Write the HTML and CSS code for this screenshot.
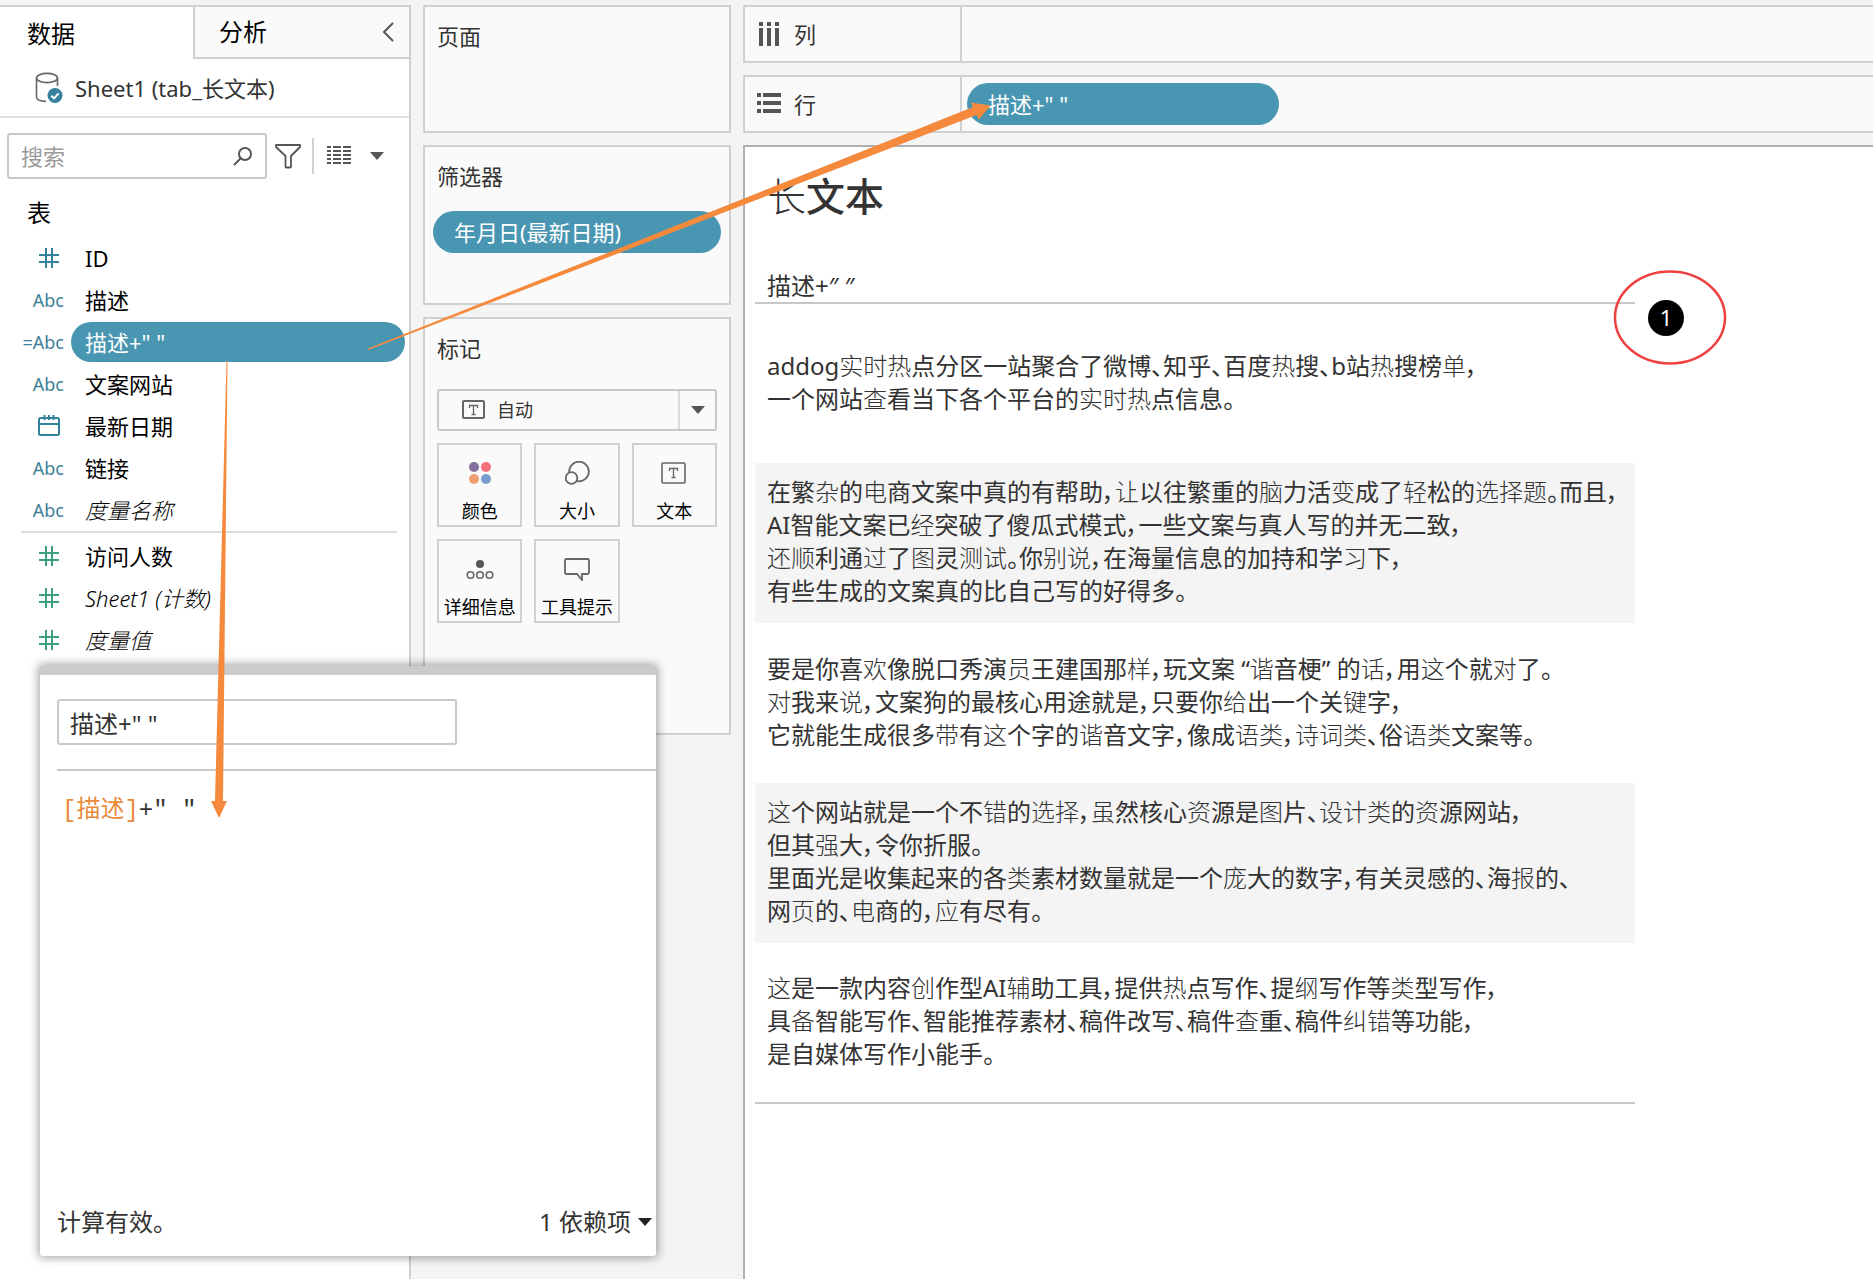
FILE: index.html
```html
<!DOCTYPE html>
<html lang="zh-CN">
<head>
<meta charset="utf-8">
<title>长文本</title>
<meta name="viewport" content="width=device-width, initial-scale=1">
<link rel="stylesheet" href="styles.css">
</head>
<body>
<div class="app">
  <aside class="data-pane">
    <div class="tabs">
      <button class="tab tab-active" type="button">数据</button>
      <button class="tab tab-idle" type="button">分析
        <svg width="14" height="22" viewBox="0 0 14 22" fill="none" stroke="#555" stroke-width="2"><path d="M12 2 3 11l9 9"/></svg>
      </button>
    </div>
    <div class="source">
      <svg width="28" height="32" viewBox="0 0 28 32" fill="none" stroke="#666" stroke-width="1.6"><ellipse cx="12" cy="6" rx="10.5" ry="4.6"/><path d="M1.500 6v19c0 2.600 4 4.200 9.500 4.400M22.500 6v8"/><circle cx="20" cy="23.500" r="7.500" fill="#35809c" stroke="none"/><path d="m16.300 23.800 2.700 2.600 4.600-5" stroke="#fff" stroke-width="2"/></svg>
      <span>Sheet1 (tab_长文本)</span>
    </div>
    <div class="search-row">
      <div class="search">
        <input type="text" placeholder="搜索" aria-label="搜索">
        <svg width="20" height="20" viewBox="0 0 20 20" fill="none" stroke="#555" stroke-width="2"><circle cx="12" cy="8" r="6"/><path d="m8 12-7 7"/></svg>
      </div>
      <button class="icon-button" type="button" aria-label="筛选"><svg width="26" height="26" viewBox="0 0 26 26" fill="none" stroke="#555" stroke-width="1.800" stroke-linejoin="round"><path d="M1 2h24v2l-9 9v10.500q0 1-1 1h-3.500q-1 0-1-1V13L1 4z"/></svg></button>
      <span class="rule"></span>
      <button class="icon-button menu" type="button" aria-label="视图">
        <svg width="24" height="20" viewBox="0 0 24 20" stroke="#555" stroke-width="2"><path d="M0 1h4M6 1h8M16 1h8M0 5h4M6 5h8M16 5h8M0 9h4M6 9h8M16 9h8M0 13h4M6 13h8M16 13h8M0 17h4M6 17h8M16 17h8"/></svg>
        <svg width="14" height="8" viewBox="0 0 14 8" fill="#555"><path d="M0 0h14L7 8z"/></svg>
      </button>
    </div>
    <h2 class="pane-title">表</h2>
    <ul class="fields">
      <li><span class="type"><svg class="hash" width="20" height="20" viewBox="0 0 20 20"><path d="M7 0v20M13 0v20M0 7h20M0 14h20"/></svg></span><span class="name">ID</span></li>
      <li><span class="type">Abc</span><span class="name">描述</span></li>
      <li><span class="type">=Abc</span><span class="name selected">描述+" "</span></li>
      <li><span class="type">Abc</span><span class="name">文案网站</span></li>
      <li><span class="type"><svg class="cal" width="22" height="22" viewBox="0 0 22 22"><rect x="1" y="3" width="20" height="17" rx="1.500"/><path d="M1 9h20M6.500 0v5M11 0v5M15.500 0v5"/></svg></span><span class="name">最新日期</span></li>
      <li><span class="type">Abc</span><span class="name">链接</span></li>
      <li><span class="type">Abc</span><span class="name generated">度量名称</span></li>
    </ul>
    <ul class="fields measures">
      <li><span class="type"><svg class="hash" width="20" height="20" viewBox="0 0 20 20"><path d="M7 0v20M13 0v20M0 7h20M0 14h20"/></svg></span><span class="name">访问人数</span></li>
      <li><span class="type"><svg class="hash" width="20" height="20" viewBox="0 0 20 20"><path d="M7 0v20M13 0v20M0 7h20M0 14h20"/></svg></span><span class="name generated">Sheet1 (计数)</span></li>
      <li><span class="type"><svg class="hash" width="20" height="20" viewBox="0 0 20 20"><path d="M7 0v20M13 0v20M0 7h20M0 14h20"/></svg></span><span class="name generated">度量值</span></li>
    </ul>
  </aside>

  <section class="cards">
    <div class="card pages"><h3>页面</h3></div>
    <div class="card filters"><h3>筛选器</h3><button class="pill" type="button">年月日(最新日期)</button></div>
    <div class="card marks">
      <h3>标记</h3>
      <div class="mark-type">
        <svg class="t-icon" width="24" height="20" viewBox="0 0 24 20" fill="none" stroke="#666" stroke-width="2"><rect x="1" y="1" width="21" height="17" rx="1"/><path d="M7.500 8V5.500h8V8M11.500 5.500v9M9.500 14.500h4" stroke-width="1.300"/></svg>
        <select aria-label="标记类型"><option>自动</option></select>
        <span class="drop"><svg width="14" height="8" viewBox="0 0 14 8" fill="#555"><path d="M0 0h14L7 8z"/></svg></span>
      </div>
      <div class="mark-grid">
        <button type="button"><svg width="24" height="24" viewBox="0 0 24 24"><circle cx="6" cy="6" r="5" fill="#84709c"/><circle cx="18" cy="6" r="5" fill="#f4707c"/><circle cx="6" cy="18" r="5" fill="#f0a070"/><circle cx="18" cy="18" r="5" fill="#7a9ccc"/></svg>颜色</button>
        <button type="button"><svg width="26" height="24" viewBox="0 0 26 24" fill="#fafafa" stroke="#666" stroke-width="1.800"><circle cx="15" cy="10.500" r="9.800"/><circle cx="7.500" cy="17" r="5.800"/></svg>大小</button>
        <button type="button"><svg width="26" height="24" viewBox="0 0 26 24" fill="none" stroke="#666" stroke-width="1.600"><rect x="1" y="2" width="23" height="20" rx="1"/><path d="M8.500 10V7.500h8V10M12.500 7.500v9M10.500 16.500h4" stroke-width="1.300"/></svg>文本</button>
        <button type="button"><svg width="28" height="24" viewBox="0 0 28 24" fill="none" stroke="#666" stroke-width="1.600"><circle cx="14" cy="7" r="4" fill="#555" stroke="none"/><circle cx="4.500" cy="18" r="3.300"/><circle cx="14" cy="18" r="3.300"/><circle cx="23.500" cy="18" r="3.300"/></svg>详细信息</button>
        <button type="button"><svg width="26" height="24" viewBox="0 0 26 24" fill="none" stroke="#666" stroke-width="1.800"><path d="M2.500 2h21q1.500 0 1.500 1.500v12q0 1.500-1.500 1.500H18v6l-5-6H2.500Q1 17 1 15.500v-12Q1 2 2.500 2z"/></svg>工具提示</button>
      </div>
    </div>
  </section>

  <main class="workspace">
    <div class="shelf">
      <div class="shelf-label"><svg width="24" height="24" viewBox="0 0 24 24" fill="#555"><path d="M2 0h4v4H2zM10 0h4v4h-4zM18 0h4v4h-4zM2 6h4v18H2zM10 6h4v18h-4zM18 6h4v18h-4z"/></svg>列</div>
      <div class="shelf-drop"></div>
    </div>
    <div class="shelf">
      <div class="shelf-label"><svg width="24" height="24" viewBox="0 0 24 24" fill="#555"><path d="M0 1h4v4H0zM0 9h4v4H0zM0 17h4v4H0zM6 1h18v4H6zM6 9h18v4H6zM6 17h18v4H6z"/></svg>行</div>
      <div class="shelf-drop"><button class="pill row-pill" type="button">描述+" "</button></div>
    </div>
    <div class="sheet">
      <h1><span class="thin">长</span>文本</h1>
      <table>
        <thead><tr><th scope="col">描述+″ ″</th></tr></thead>
        <tbody>
          <tr><td>addog<span class="thin">实时热</span>点分区一站聚合了微博、知乎、百度<span class="thin">热</span>搜、b站<span class="thin">热</span>搜榜<span class="thin">单</span>，<br>一个网站<span class="thin">查</span>看当下各个平台的<span class="thin">实时热</span>点信息。</td></tr>
          <tr><td>在繁<span class="thin">杂</span>的<span class="thin">电</span>商文案中真的有帮助，<span class="thin">让</span>以往繁重的<span class="thin">脑</span>力活<span class="thin">变</span>成了<span class="thin">轻</span>松的<span class="thin">选择题</span>。而且，<br>AI智能文案已<span class="thin">经</span>突破了傻瓜式模式，一些文案与真人写的并无二致，<br><span class="thin">还顺</span>利通<span class="thin">过</span>了<span class="thin">图</span>灵<span class="thin">测试</span>。你<span class="thin">别说</span>，在海量信息的加持和学<span class="thin">习</span>下，<br>有些生成的文案真的比自己写的好得多。</td></tr>
          <tr><td>要是你喜<span class="thin">欢</span>像脱口秀演<span class="thin">员</span>王建国那<span class="thin">样</span>，玩文案 “<span class="thin">谐</span>音梗” 的<span class="thin">话</span>，用<span class="thin">这</span>个就<span class="thin">对</span>了。<br><span class="thin">对</span>我来<span class="thin">说</span>，文案狗的最核心用途就是，只要你<span class="thin">给</span>出一个关<span class="thin">键</span>字，<br>它就能生成很多<span class="thin">带</span>有<span class="thin">这</span>个字的<span class="thin">谐</span>音文字，像成<span class="thin">语类</span>，<span class="thin">诗词类</span>、俗<span class="thin">语类</span>文案等。</td></tr>
          <tr><td><span class="thin">这</span>个网站就是一个不<span class="thin">错</span>的<span class="thin">选择</span>，<span class="thin">虽</span>然核心<span class="thin">资</span>源是<span class="thin">图</span>片、<span class="thin">设计类</span>的<span class="thin">资</span>源网站，<br>但其<span class="thin">强</span>大，令你折服。<br>里面光是收集起来的各<span class="thin">类</span>素材数量就是一个<span class="thin">庞</span>大的数字，有关灵感的、海<span class="thin">报</span>的、<br>网<span class="thin">页</span>的、<span class="thin">电</span>商的，<span class="thin">应</span>有尽有。</td></tr>
          <tr><td><span class="thin">这</span>是一款内容<span class="thin">创</span>作型AI<span class="thin">辅</span>助工具，提供<span class="thin">热</span>点写作、提<span class="thin">纲</span>写作等<span class="thin">类</span>型写作，<br>具<span class="thin">备</span>智能写作、智能推荐素材、稿件改写、稿件<span class="thin">查</span>重、稿件<span class="thin">纠错</span>等功能，<br>是自媒体写作小能手。</td></tr>
        </tbody>
      </table>
    </div>
  </main>
</div>

<section class="dialog" role="dialog" aria-label="计算字段">
  <div class="dialog-head"><input type="text" value='描述+" "' aria-label="字段名称"></div>
  <div class="formula"><span class="field-ref">[描述]</span>+" "</div>
  <div class="dialog-foot">
    <span>计算有效。</span>
    <button type="button">1 依赖项<svg width="14" height="8" viewBox="0 0 14 8" fill="#222"><path d="M0 0h14L7 8z"/></svg></button>
  </div>
</section>

<svg class="notes" width="1740" height="830" viewBox="0 0 1740 830" aria-hidden="true">
  <path fill="#f68a3c" d="M368 348.500 973 107 971 102.500 990.500 105.500 979 119.500 976.500 115 368 350z"/>
  <path fill="#f68a3c" d="M226.500 361 215 801h-4l8 17 8-17h-4L227.500 361z"/>
  <ellipse cx="1670" cy="317.500" rx="55" ry="46" fill="none" stroke="#ee4040" stroke-width="2.500"/>
</svg>
<span class="badge">1</span>
</body>
</html>
```
FILE: styles.css
```css
* { box-sizing: border-box; }

body {
  margin: 0;
  background: #f4f4f4;
  color: #333;
  font: 22px/32px "Noto Sans", "Noto Sans CJK SC", sans-serif;
}

button, input, select {
  margin: 0;
  padding: 0;
  border: 0;
  background: none;
  color: inherit;
  font: inherit;
}

h1, h2, h3 { margin: 0; font-weight: 400; }
ul { margin: 0; padding: 0; list-style: none; }
svg { display: block; flex: none; }

.app {
  display: grid;
  grid-template-columns: 411px 308px 1fr;
  gap: 12px;
  min-height: 100vh;
  padding-top: 5px;
}

/* data pane */
.data-pane {
  background: #fff;
  border-top: 2px solid #d0d0d0;
  border-right: 2px solid #d0d0d0;
}
.tabs { display: flex; height: 52px; font-size: 24px; color: #000; }
.tab { text-align: left; padding: 2px 0 0 27px; }
.tab-active { width: 193px; }
.tab-idle {
  flex: 1;
  display: flex;
  align-items: center;
  justify-content: space-between;
  padding: 0 14px 0 24px;
  background: #fafafa;
  border-left: 2px solid #d0d0d0;
  border-bottom: 2px solid #d0d0d0;
}
.source {
  display: flex;
  align-items: center;
  gap: 12px;
  height: 59px;
  padding-left: 35px;
  border-bottom: 2px solid #e0e0e0;
}
.search-row { display: flex; align-items: center; padding: 15px 0 0 7px; }
.search {
  display: flex;
  align-items: center;
  width: 260px;
  height: 46px;
  padding: 0 12px;
  border: 2px solid #c8c8c8;
  border-radius: 3px;
}
.search input { flex: 1; min-width: 0; }
.search input::placeholder { color: #999; opacity: 1; }
.icon-button { padding-left: 8px; }
.rule { width: 2px; height: 36px; margin: 0 13px 0 11px; background: #d0d0d0; }
.menu { display: flex; align-items: center; gap: 19px; padding-left: 0; }
.pane-title { padding: 18px 0 8px 27px; font-size: 24px; color: #000; }
.fields li { display: flex; align-items: center; height: 42px; }
.type {
  width: 64px;
  margin-right: 7px;
  text-align: right;
  font-size: 18px;
  color: #3b7f98;
}
.type svg { margin-left: auto; margin-right: 5px; fill: none; stroke: #35809c; stroke-width: 2; }
.type .cal { margin-right: 4px; }
.name { flex: 1; height: 40px; margin-right: 4px; padding-left: 14px; line-height: 40px; color: #000; }
.selected { border-radius: 20px; background: #4996b2; color: #fff; }
.generated { font-style: italic; font-weight: 300; }
.measures { margin: 0 12px 0 21px; border-top: 2px solid #dcdcdc; padding-top: 2px; }
.measures .type { width: 43px; }
.measures .type svg { stroke: #3f9f7c; }

/* cards */
.cards { display: flex; flex-direction: column; gap: 12px; }
.card { background: #fafafa; border: 2px solid #d0d0d0; }
.card h3 { padding: 13px 0 0 12px; font-size: 22px; }
.pages { height: 128px; }
.filters { height: 160px; }
.marks { height: 418px; }
.pill {
  display: block;
  height: 42px;
  border-radius: 21px;
  background: #4996b2;
  color: #fff;
  text-align: left;
  padding-left: 21px;
}
.filters .pill { width: 288px; margin: 19px 0 0 8px; }
.mark-type {
  display: flex;
  align-items: center;
  height: 42px;
  margin: 25px 12px 12px;
  border: 2px solid #c8c8c8;
  border-radius: 3px;
}
.t-icon { margin: 0 11px 0 23px; }
.mark-type select { flex: 1; appearance: none; font-size: 18px; height: 36px; }
.drop {
  display: flex;
  align-items: center;
  justify-content: center;
  width: 37px;
  height: 38px;
  border-left: 2px solid #dcdcdc;
}
.mark-grid {
  display: grid;
  grid-template-columns: repeat(3, 1fr);
  gap: 12px;
  margin: 0 12px;
}
.mark-grid button {
  display: flex;
  flex-direction: column;
  align-items: center;
  gap: 12px;
  height: 84px;
  padding-top: 16px;
  border: 2px solid #d0d0d0;
  font-size: 18px;
  line-height: 28px;
  color: #000;
  white-space: nowrap;
}

/* shelves and sheet */
.workspace { display: flex; flex-direction: column; min-width: 0; }
.shelf {
  display: flex;
  height: 58px;
  margin-bottom: 12px;
  background: #fafafa;
  border: 2px solid #d0d0d0;
  border-right: 0;
}
.shelf-label {
  display: flex;
  align-items: center;
  gap: 13px;
  width: 217px;
  padding-left: 12px;
  border-right: 2px solid #d0d0d0;
}
.shelf-drop { flex: 1; padding: 6px 0 0 5px; }
.row-pill { width: 312px; }
.sheet {
  flex: 1;
  padding: 22px 0 0 10px;
  background: #fff;
  border-top: 2px solid #b0b0b0;
  border-left: 2px solid #b0b0b0;
}
.sheet h1 { padding-left: 12px; font-size: 39px; line-height: 54px; font-weight: 500; }
.thin { font-weight: 200; }
table { width: 880px; max-width: 100%; border-collapse: collapse; border-bottom: 2px solid #c8c8c8; font-size: 24px; line-height: 33px; }
th { height: 80px; padding: 0 12px; vertical-align: bottom; text-align: left; font-weight: 400; border-bottom: 2px solid #c8c8c8; }
td { height: 160px; padding: 0 12px 4px; white-space: nowrap; vertical-align: middle; font-feature-settings: "palt"; }
tbody tr:nth-child(even) { background: #f4f4f4; }

/* calculation dialog */
.dialog {
  position: absolute;
  left: 40px;
  top: 666px;
  display: flex;
  flex-direction: column;
  width: 616px;
  height: 590px;
  background: #fff;
  border-top: 9px solid #cbcbcb;
  border-radius: 3px;
  box-shadow: 0 0 10px 2px rgba(0, 0, 0, .35);
  font-size: 24px;
}
.dialog-head { margin-left: 17px; padding: 24px 0; border-bottom: 2px solid #c8c8c8; }
.dialog-head input {
  display: block;
  width: 400px;
  height: 46px;
  padding-left: 11px;
  border: 2px solid #c8c8c8;
  border-radius: 3px;
}
.formula {
  flex: 1;
  padding: 24px 0 0 22px;
  font-family: "Liberation Mono", "Noto Sans CJK SC", monospace;
  white-space: pre;
}
.field-ref { color: #e88a3c; }
.dialog-foot { display: flex; justify-content: space-between; padding: 0 4px 18px 17px; }
.dialog-foot button { display: flex; align-items: center; gap: 7px; }

/* annotations drawn over the workbook */
.notes { position: absolute; left: 0; top: 0; pointer-events: none; }
.badge {
  position: absolute;
  left: 1648px;
  top: 300px;
  width: 36px;
  height: 36px;
  border-radius: 50%;
  background: #000;
  color: #fff;
  text-align: center;
  line-height: 34px;
}
```
